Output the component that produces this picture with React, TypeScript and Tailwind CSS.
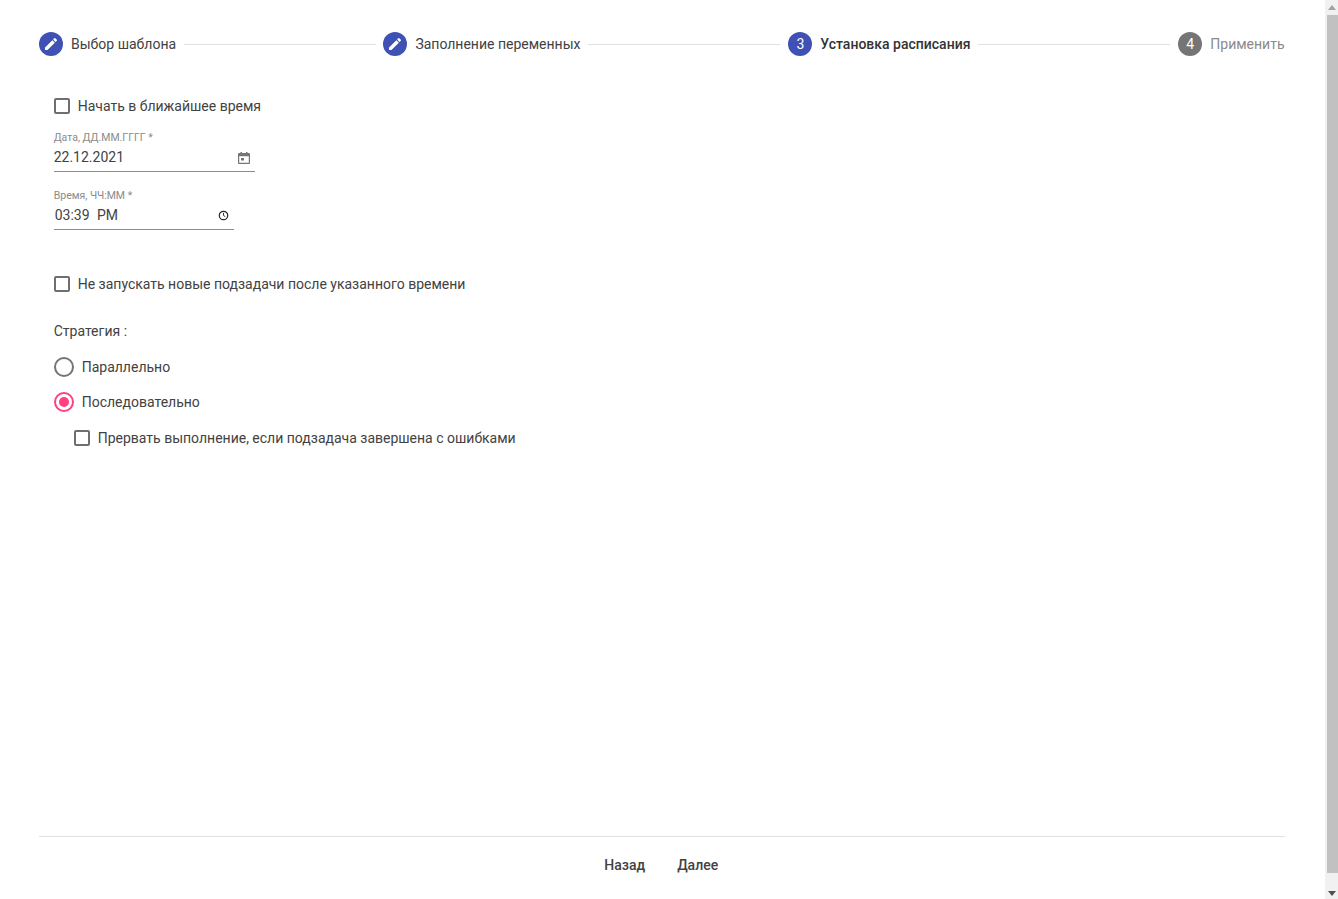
import { Fragment } from "react";

const steps = [
  { label: "Выбор шаблона", state: "done" },
  { label: "Заполнение переменных", state: "done" },
  { label: "Установка расписания", state: "active", num: 3 },
  { label: "Применить", state: "todo", num: 4 },
];

function Step({ label, state, num }: { label: string; state: string; num?: number }) {
  return (
    <div className="flex items-center shrink-0">
      <span
        className={`w-6 h-6 rounded-full flex items-center justify-center text-white text-sm ${
          state === "todo" ? "bg-[#757575]" : "bg-[#3f51b5]"
        }`}
      >
        {num ?? (
          <svg viewBox="0 0 24 24" className="w-4 h-4 fill-white">
            <path d="M3 17.25V21h3.75L17.81 9.94l-3.75-3.75L3 17.25zM20.71 7.04c.39-.39.39-1.02 0-1.41l-2.34-2.34c-.39-.39-1.02-.39-1.41 0l-1.83 1.83 3.75 3.75 1.83-1.83z" />
          </svg>
        )}
      </span>
      <span
        className={`ml-2 text-sm ${
          state === "active" ? "font-medium text-[#333]" : state === "todo" ? "text-[#8a8a8a]" : "text-[#424242]"
        }`}
      >
        {label}
      </span>
    </div>
  );
}

function Check({ label, className = "" }: { label: string; className?: string }) {
  return (
    <label className={`flex items-center h-6 text-sm text-[#424242] ${className}`}>
      <span className="w-4 h-4 rounded-[2px] border-2 border-[#6f6f6f] mr-2 shrink-0" />
      {label}
    </label>
  );
}

function Radio({ label, checked }: { label: string; checked?: boolean }) {
  return (
    <label className="flex items-center h-6 text-sm text-[#424242]">
      <span
        className={`w-5 h-5 rounded-full border-2 mr-2 flex items-center justify-center shrink-0 ${
          checked ? "border-[#ff4081]" : "border-[#757575]"
        }`}
      >
        {checked && <span className="w-2.5 h-2.5 rounded-full bg-[#ff4081]" />}
      </span>
      {label}
    </label>
  );
}

function Field({ label, value, width, icon, className = "" }: { label: string; value: string; width: string; icon: React.ReactNode; className?: string }) {
  return (
    <div className={`flex flex-col ${width} ${className}`}>
      <span className="text-[10.5px] leading-4 mt-px text-[#8a8a8a]">{label}</span>
      <div className="flex items-center justify-between h-[26px] pb-1 border-b border-[#8c8c8c] text-sm text-[#424242]">
        <span className="whitespace-pre [word-spacing:4px]">{value}</span>
        {icon}
      </div>
    </div>
  );
}

export default function App() {
  return (
    <div className="flex h-[899px] overflow-hidden bg-white font-['Roboto','Liberation_Sans',sans-serif]">
      <main className="flex-1 flex flex-col pl-[39px] pr-[40.5px]">
        <div className="flex items-center pt-8 h-14">
          {steps.map((s, i) => (
            <Fragment key={s.label}>
              <Step {...s} />
              {i < steps.length - 1 && (
                <div className={`flex-1 h-px bg-[#e0e0e0] ml-2 ${i === 0 ? "mr-[7.4px]" : "mr-2"}`} />
              )}
            </Fragment>
          ))}
        </div>

        <div className="flex-1 pl-[14.7px] pt-[38px]">
          <Check label="Начать в ближайшее время" />
          <Field
            label="Дата, ДД.ММ.ГГГГ *"
            value="22.12.2021"
            width="w-[201px]"
            className="mt-[11px]"
            icon={
              <svg viewBox="0 0 12 12" className="w-3 h-3 mr-[5px] mt-[3px] fill-[#757575]">
                <path d="M2.5 0h1.5v1h4V0h1.5v1H11a1 1 0 0 1 1 1v9a1 1 0 0 1-1 1H1a1 1 0 0 1-1-1V2a1 1 0 0 1 1-1h1.5zM1.2 4.2v6.6h9.6V4.2zM3 6h3v2.6H3z" />
              </svg>
            }
          />
          <Field
            label="Время, ЧЧ:ММ *"
            value="03:39 PM"
            width="w-[180px]"
            className="mt-[15px] [&>div>span]:pl-px"
            icon={
              <svg viewBox="0 0 12 12" className="w-[11px] h-[11px] mr-[5px] mt-0.5 fill-none stroke-[#222]">
                <circle cx="6" cy="6" r="4.6" strokeWidth="1.3" />
                <path d="M6 3.2V6l2 1.2" strokeWidth="1" />
              </svg>
            }
          />
          <Check label="Не запускать новые подзадачи после указанного времени" className="mt-[42px]" />
          <p className="mt-[23px] h-6 leading-6 text-sm text-[#424242]">Стратегия :</p>
          <div className="mt-3 flex flex-col gap-[11px]">
            <Radio label="Параллельно" />
            <Radio label="Последовательно" checked />
          </div>
          <Check label="Прервать выполнение, если подзадача завершена с ошибками" className="mt-3 ml-[20px]" />
        </div>

        <footer className="border-t border-[#e0e0e0] h-[63px] flex justify-center gap-4 pt-4 pr-px text-sm font-medium text-[#424242]">
          <button className="px-2 h-6 mb-auto">Назад</button>
          <button className="px-2 h-6 mb-auto">Далее</button>
        </footer>
      </main>

      <aside className="w-[13px] bg-[#f1f1f1] flex flex-col items-end">
        <div className="h-[15px] w-full flex items-center justify-center">
          <svg viewBox="0 0 8 5" className="w-2 h-[5px] fill-[#a3a3a3]"><path d="M4 0l4 5H0z" /></svg>
        </div>
        <div className="w-[11px] h-[858px] bg-[#c1c1c1]" />
        <div className="flex-1 w-full flex items-end justify-center pb-[3px]">
          <svg viewBox="0 0 8 5" className="w-2 h-[5px] fill-[#505050]"><path d="M0 0h8L4 5z" /></svg>
        </div>
      </aside>
    </div>
  );
}
